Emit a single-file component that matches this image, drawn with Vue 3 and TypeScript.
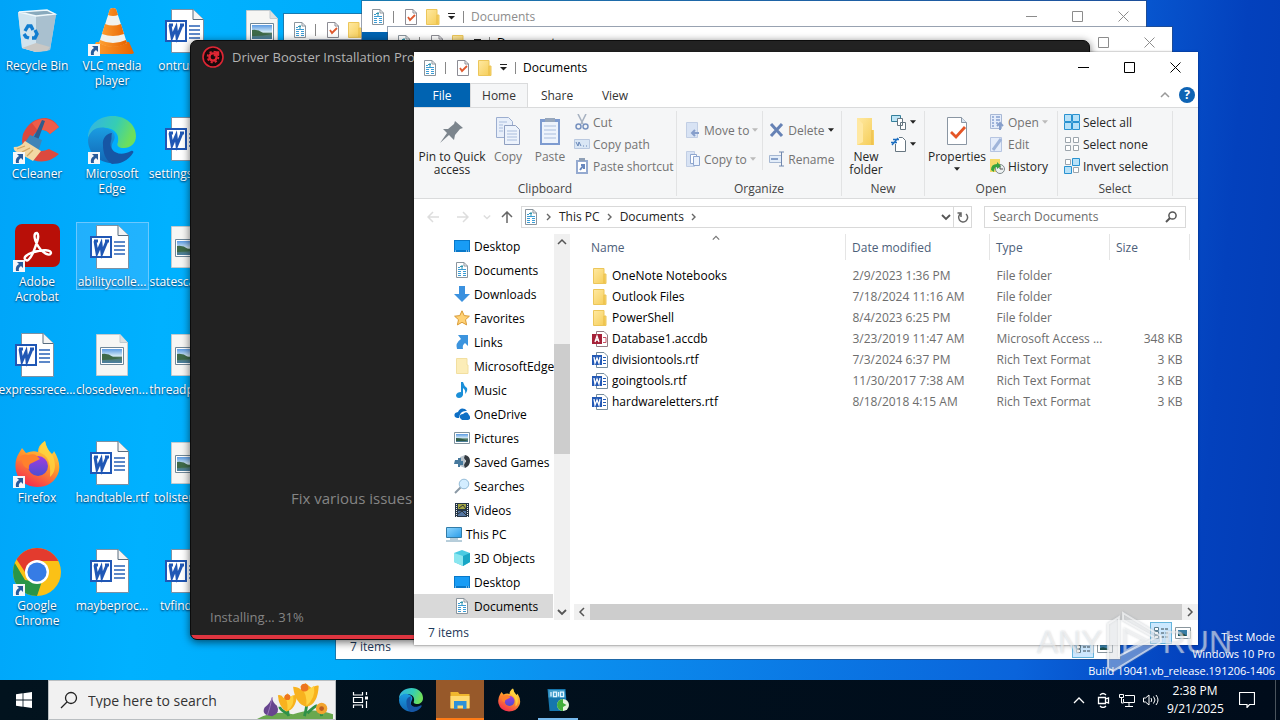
<script setup lang="ts">
import { ref } from 'vue'

interface Shortcut {
  label: string
  icon: string
  link?: boolean
  selected?: boolean
}
interface FileRow {
  name: string
  icon: string
  date: string
  type: string
  size: string
}
interface NavItem {
  label: string
  icon: string
  root?: boolean
  current?: boolean
}

const shortcuts: Shortcut[] = [
  { label: 'Recycle Bin', icon: 'bin' },
  { label: 'CCleaner', icon: 'ccleaner', link: true },
  { label: 'Adobe Acrobat', icon: 'acrobat', link: true },
  { label: 'expressrece...', icon: 'word' },
  { label: 'Firefox', icon: 'firefox', link: true },
  { label: 'Google Chrome', icon: 'chrome', link: true },
  { label: 'VLC media player', icon: 'vlc', link: true },
  { label: 'Microsoft Edge', icon: 'edge', link: true },
  { label: 'abilitycolle...', icon: 'word', selected: true },
  { label: 'closedeven...', icon: 'image' },
  { label: 'handtable.rtf', icon: 'word' },
  { label: 'maybeproc...', icon: 'word' },
  { label: 'ontrust.rtf', icon: 'word' },
  { label: 'settings.rtf.rtf', icon: 'word' },
  { label: 'statescar.png', icon: 'image' },
  { label: 'threadpa.png', icon: 'image' },
  { label: 'tolisten.png', icon: 'image' },
  { label: 'tvfinds.rtf', icon: 'word' },
  { label: '', icon: 'image' },
]

const backWindows = [
  { id: 'a', active: false },
  { id: 'b', active: false },
  { id: 'c', active: false },
  { id: 'd', active: false },
  { id: 'e', active: true },
]

const tabs = ['Home', 'Share', 'View']

const navItems: NavItem[] = [
  { label: 'Desktop', icon: 'n-desktop' },
  { label: 'Documents', icon: 'n-docs' },
  { label: 'Downloads', icon: 'n-down' },
  { label: 'Favorites', icon: 'n-star' },
  { label: 'Links', icon: 'n-link' },
  { label: 'MicrosoftEdge', icon: 'n-palefolder' },
  { label: 'Music', icon: 'n-music' },
  { label: 'OneDrive', icon: 'n-cloud' },
  { label: 'Pictures', icon: 'n-pic' },
  { label: 'Saved Games', icon: 'n-games' },
  { label: 'Searches', icon: 'n-search' },
  { label: 'Videos', icon: 'n-video' },
  { label: 'This PC', icon: 'n-pc', root: true },
  { label: '3D Objects', icon: 'n-cube' },
  { label: 'Desktop', icon: 'n-desktop' },
  { label: 'Documents', icon: 'n-docs', current: true },
]

const files: FileRow[] = [
  { name: 'OneNote Notebooks', icon: 'n-folder', date: '2/9/2023 1:36 PM', type: 'File folder', size: '' },
  { name: 'Outlook Files', icon: 'n-folder', date: '7/18/2024 11:16 AM', type: 'File folder', size: '' },
  { name: 'PowerShell', icon: 'n-folder', date: '8/4/2023 6:25 PM', type: 'File folder', size: '' },
  { name: 'Database1.accdb', icon: 'n-access', date: '3/23/2019 11:47 AM', type: 'Microsoft Access ...', size: '348 KB' },
  { name: 'divisiontools.rtf', icon: 'n-word', date: '7/3/2024 6:37 PM', type: 'Rich Text Format', size: '3 KB' },
  { name: 'goingtools.rtf', icon: 'n-word', date: '11/30/2017 7:38 AM', type: 'Rich Text Format', size: '3 KB' },
  { name: 'hardwareletters.rtf', icon: 'n-word', date: '8/18/2018 4:15 AM', type: 'Rich Text Format', size: '3 KB' },
]

const selectActions = [
  { label: 'Select all', icon: 'r-all' },
  { label: 'Select none', icon: 'r-none' },
  { label: 'Invert selection', icon: 'r-invert' },
]

const query = ref('')
const taskQuery = ref('')
</script>

<template>
  <div class="desktop">
    <svg class="defs" aria-hidden="true">
      <defs>
        <linearGradient id="gEdgeA" x1="0" y1="0" x2="1" y2="0.3"><stop offset="0" stop-color="#35b1e8" /><stop offset=".6" stop-color="#35cdb4" /><stop offset="1" stop-color="#6ddf5c" /></linearGradient>
        <linearGradient id="gEdgeB" x1="0" y1="0" x2="0" y2="1"><stop offset="0" stop-color="#1b9de2" /><stop offset="1" stop-color="#1266b4" /></linearGradient>
        <linearGradient id="gFire" x1=".8" y1="0" x2=".3" y2="1"><stop offset="0" stop-color="#ffe14a" /><stop offset=".45" stop-color="#ff9a2c" /><stop offset="1" stop-color="#f42a50" /></linearGradient>
        <linearGradient id="gViolet" x1="0" y1="0" x2="0" y2="1"><stop offset="0" stop-color="#a23be0" /><stop offset="1" stop-color="#4c4fd0" /></linearGradient>
        <linearGradient id="gSky" x1="0" y1="0" x2="0" y2="1"><stop offset="0" stop-color="#5b9be2" /><stop offset=".5" stop-color="#d5eaf6" /><stop offset=".6" stop-color="#557b62" /><stop offset="1" stop-color="#4a7fa3" /></linearGradient>
        <linearGradient id="gFold" x1="0" y1="0" x2="1" y2="1"><stop offset="0" stop-color="#ffe9a2" /><stop offset="1" stop-color="#f5cc55" /></linearGradient>
        <linearGradient id="gCone" x1="0" y1="0" x2="1" y2="0"><stop offset="0" stop-color="#ffa234" /><stop offset="1" stop-color="#e76300" /></linearGradient>
        <linearGradient id="gScreen" x1="0" y1="0" x2="1" y2="1"><stop offset="0" stop-color="#8ed6ff" /><stop offset="1" stop-color="#2a9ce8" /></linearGradient>
        <clipPath id="cc"><circle cx="24" cy="24" r="24" /></clipPath>
      </defs>

      <symbol id="bin" viewBox="0 0 48 48">
        <path d="M5 4 34 2 43 6 37 42 23 44 9 40Z" fill="#c7dcea" />
        <path d="M5 4 23 8 23 44 9 40Z" fill="#d0e3ee" /><path d="M23 8 43 6 37 42 23 44Z" fill="#a9c0cf" />
        <path d="M6 4 34 2 42 6 23 8Z" fill="#89aabd" stroke="#eff8fc" stroke-width="1.400" />
        <path d="m9 40 14-5 14 4-3 4-11 1Z" fill="#c9c8c5" />
        <g fill="none" stroke="#117dd0" stroke-width="3.400"><path d="m12 23 3-5h3l2 4" /><path d="m22 22 2 4-2 4h-3" /><path d="m16 30-3-1-2-3" /></g>
      </symbol>
      <symbol id="vlc" viewBox="0 0 48 48">
        <path d="M8 34h33l5 11q-1 1-3 1H5q-2 0-2-2Z" fill="url(#gCone)" />
        <path d="M22 1q3-2 6 0l11 34q-14 7-28 0Z" fill="#f1f1ed" />
        <path d="M22 1q3-2 6 0l2 6q-5 2-10 0ZM17 16q8 3 16 0l3 10q-11 4-22 0ZM11 35l1-3q13 6 26 0l1 3q-14 8-28 0Z" fill="url(#gCone)" />
      </symbol>
      <symbol id="ccleaner" viewBox="0 0 48 48">
        <path d="M46 11 37 18Q32 12 25 15 17 20 20 30 25 38 36 33L46 38Q34 49 20 44 6 35 10 18 17 2 33 2 41 3 46 11Z" fill="#dc493e" />
        <path d="M46 11 37 18Q32 12 25 15L19 7Q34-3 46 11Z" fill="#ee5d49" />
        <path d="m29 4 3 1-8 22-5-2Z" fill="#315c8b" /><path d="m17 19 12 5-4 12-14-8Z" fill="#3f84b8" />
        <path d="M12 25 28 35 20 45 2 35Q0 32 1 31 8 31 12 25Z" fill="#f2d7a3" />
        <path d="m4 33 8-3m-3 6 8-4m-3 8 6-6" stroke="#d2a662" stroke-width="1.300" />
      </symbol>
      <symbol id="edge" viewBox="0 0 48 48">
        <path d="M0 22C0 7 13 0 25 0 38 0 48 9 48 20 48 28 42 32 36 32 31 32 28 30 30 26 32 16 23 11 14 12 7 13 2 17 0 22Z" fill="url(#gEdgeA)" />
        <path d="M0 24C1 14 10 10 17 12 28 15 28 21 25 26 21 33 27 41 37 42 30 49 20 48 12 44 4 39 0 32 0 24Z" fill="url(#gEdgeB)" />
        <path d="M15 29C14 22 19 17 24 17 23 20 24 22 23 25 20 34 30 42 43 35 45 34 46 36 45 37 40 45 32 48 24 48 17 44 15 36 15 29Z" fill="#1656a5" />
      </symbol>
      <symbol id="acrobat" viewBox="0 0 48 48">
        <rect x="2" y="0" width="45" height="43" rx="7" fill="#b80f08" />
        <path d="M13 36C9 34 14 30 21 28 30 25 38 26 38 29 37 33 29 29 25 22 20 13 21 9 24 9 27 11 24 19 20 29 17 35 14 38 13 36Z" fill="none" stroke="#fff" stroke-width="2.400" />
      </symbol>
      <symbol id="firefox" viewBox="0 0 48 48">
        <path d="M6 13 9 8 13 13Q20 10 25 12 25 5 32 1 33 9 39 14 41 12 41 11 49 24 45 34 39 47 24 47 7 46 3 31 1 21 6 13Z" fill="url(#gFire)" />
        <circle cx="25" cy="26" r="10" fill="url(#gViolet)" />
        <path d="M4 21Q8 13 15 15q7-2 9 1l3 3-8 4q-4 1-3 6-7-2-7-9Z" fill="#ff812c" />
        <path d="M26 12Q27 5 32 1 34 10 40 16 45 30 37 37 38 24 34 18 31 14 26 12Z" fill="#ffd540" opacity=".8" />
      </symbol>
      <symbol id="chrome" viewBox="0 0 48 48">
        <g clip-path="url(#cc)"><path d="M0 0H48V48H0Z" fill="#fbc116" /><path d="M0 12 12 32 24 34 31 27 24 48H0Z" fill="#299548" /><path d="M0 8V-2H48V13H24L12 24 4 12Z" fill="#e33b2e" /></g>
        <circle cx="24" cy="24" r="12" fill="#fff" /><circle cx="24" cy="24" r="9.600" fill="#367ce5" />
      </symbol>
      <symbol id="word" viewBox="0 0 48 48">
        <path d="M8.500 1.500H30L40.500 11.500V44.500H8.500Z" fill="#fff" stroke="#7c91a4" /><path d="M30 1.500V11.500H40.500" fill="#f4f4f4" stroke="#596d7f" />
        <path d="M26 18h11M26 22h11M26 26h11M26 30h11" stroke="#2961b6" stroke-width="1.300" />
        <path d="M2 12H24V34H2Z" fill="#2057b5" /><path d="M4 14H22V32H4Z" fill="#fff" /><path d="M6 17h4M7 17l2 12 4-9 1 9 5-12M17 17h4" fill="none" stroke="#2057b5" stroke-width="3" />
      </symbol>
      <symbol id="image" viewBox="0 0 48 48">
        <path d="M8.500 2.500H32L39.500 10.500V43.500H8.500Z" fill="#f6f6f4" stroke="#c2cbd0" /><path d="M32 2.500V10.500H39.500" fill="#dce0e1" stroke="#c2cbd0" />
        <path d="M12.500 15.500H35.500V32.500H12.500Z" fill="#fff" stroke="#6f8798" /><path d="M14 17H34V31H14Z" fill="url(#gSky)" /><path d="M14 22Q20 21 25 25L34 26Q24 28 14 28Z" fill="#3f6a48" />
      </symbol>
      <symbol id="folder" viewBox="0 0 48 48">
        <path d="M5 8h15l3 4h20v28H5Z" fill="#f0b72e" /><path d="M5 16h38v25H5Z" fill="#ffdb72" /><path d="M12 26h25v16h-7v-7H19v7h-7Z" fill="#2e91d8" />
      </symbol>
      <symbol id="iobit" viewBox="0 0 48 48">
        <path d="M3 2h36l3 40-9 4H7Z" fill="#1676ad" /><path d="M5 4h32l2 15H5Z" fill="#409dcb" /><path d="M10 8v9m5-9h6v9h-6Zm10 0v9m4-9h6v9h-6Z" stroke="#e1f5ff" stroke-width="2.500" fill="none" /><circle cx="34" cy="34" r="12" fill="#e6f1df" /><path d="M34 22a12 12 0 0 0 0 24V38l7-4-7-4Z" fill="#43ae3b" />
      </symbol>

      <symbol id="n-docs" viewBox="0 0 16 16"><path d="M2.500.5H10L13.500 4V15.500H2.500Z" fill="#fff" stroke="#8b959d" /><path d="M10 .5V4h3.500" fill="none" stroke="#8b959d" /><path d="M4 5.500h2M4 7.500h8M4 9.500h3M9 9.500h3M4 11.500h3M9 11.500h3M4 13.500h3M9 13.500h3" stroke="#3b9cd4" /><path d="M8 3v4M6 4.500h3" stroke="#2f93ad" /></symbol>
      <symbol id="n-check" viewBox="0 0 16 16"><path d="M2.500.5H10L13.500 4V15.500H2.500Z" fill="#fff" stroke="#8d8d95" /><path d="M10 .5V4h3.500" fill="none" stroke="#8d8d95" /><path d="m5 8 2 3 5-5" fill="none" stroke="#e05a2f" stroke-width="1.800" /></symbol>
      <symbol id="n-folder" viewBox="0 0 16 16"><path d="M1.500.5H12V6h2v9.500H1.500Z" fill="url(#gFold)" stroke="#ecc65a" /><path d="M12 6V15" stroke="#e7b941" /></symbol>
      <symbol id="n-palefolder" viewBox="0 0 16 16"><path d="M2.500.5H13V7h1v8.500H2.500Z" fill="#fcedb8" stroke="#f2dfa0" /></symbol>
      <symbol id="n-desktop" viewBox="0 0 16 16"><path d="M0 2H16V14H0Z" fill="#0878c9" /><path d="M1 3H15V12H1Z" fill="#189cf5" /><path d="M1 13h1m10 0h1m1 0h1" stroke="#d8efff" /></symbol>
      <symbol id="n-down" viewBox="0 0 16 16"><path d="M5 0h6v8h5l-8 8-8-8h5Z" fill="#3b91df" /></symbol>
      <symbol id="n-star" viewBox="0 0 16 16"><path d="m8 .8 2.200 4.800 5.200.6-3.900 3.500 1.100 5.200L8 12.300l-4.600 2.600 1.100-5.200L.6 6.200l5.200-.6Z" fill="#ffd276" stroke="#d99a35" /></symbol>
      <symbol id="n-link" viewBox="0 0 16 16"><path d="M4 1h10v11l-3-3q-3 2-2 6H3Q1 9 7 5Z" fill="#3c94de" /></symbol>
      <symbol id="n-music" viewBox="0 0 16 16"><path d="M7 0h2q1 4 4 6 1 3-2 6 1-4-2-6v7q-1 3-4 3T2 13q1-3 5-3Z" fill="#1b8fd8" /></symbol>
      <symbol id="n-cloud" viewBox="0 0 16 16"><path d="M1 11Q-1 7 4 6q2-5 7-3l2 2Q6 4 5 12H3Zm5 1q-1-4 3-4 4-4 6 1 3 4-1 5H8Z" fill="#0e6fc5" /></symbol>
      <symbol id="n-pic" viewBox="0 0 16 16"><path d="M.5 2.500h15v11H.5Z" fill="#fff" stroke="#81939f" /><path d="M2 4h12v8H2Z" fill="url(#gSky)" /><path d="M2 8q5 0 12 3H2Z" fill="#315c46" /></symbol>
      <symbol id="n-games" viewBox="0 0 16 16"><path d="M6 3 11 1v13l-5-2Z" fill="#b7c2cb" /><path d="M11 1q5 1 5 6 0 5-5 7l-1-3 2-4-2-3Z" fill="#343a40" /><path d="M1 6h3V4h3v3h2v4H6v2H4v-3H0Z" fill="#47799d" /></symbol>
      <symbol id="n-search" viewBox="0 0 16 16"><path d="m7 9-6 6" stroke="#8a98a4" stroke-width="2" /><circle cx="10" cy="6" r="4.800" fill="#d3edff" stroke="#94bcd8" /></symbol>
      <symbol id="n-video" viewBox="0 0 16 16"><path d="M1 1h14v14H1Z" fill="#263646" /><path d="M4 2h8v5H4Z" fill="#a3a644" /><path d="M4 9h8v5H4Z" fill="#5375a1" /><path d="m5 6 4-3 3 4M4 12l4-3 4 4" stroke="#2e3437" fill="none" /><path d="M2.500 2v13M13.500 2v13" stroke="#eee" stroke-dasharray="1 1" /></symbol>
      <symbol id="n-pc" viewBox="0 0 16 16"><path d="M.5 1.500h15v10H.5Z" fill="url(#gScreen)" stroke="#327ca8" /><path d="M4 13h8M0 15h16" stroke="#6e9cb6" /></symbol>
      <symbol id="n-cube" viewBox="0 0 16 16"><path d="m0 3 8-3 8 3v9l-7 4-9-4Z" fill="#49cbe2" /><path d="m0 3 9 3v10l-9-4Z" fill="#8ae6ef" /><path d="m9 6 7-3v9l-7 4Z" fill="#18a6c5" /></symbol>
      <symbol id="n-word" viewBox="0 0 16 16"><path d="M4.500.5H12L15.500 4v11.500h-11Z" fill="#fff" stroke="#758c9d" /><path d="M11 5.500h3M11 8.500h3M11 11.500h3" stroke="#225bb4" /><path d="M0 3h10v10H0Z" fill="#2359b5" /><path d="m2 5 1 6 2-5 2 5 1-6" fill="none" stroke="#fff" stroke-width="1.300" /></symbol>
      <symbol id="n-access" viewBox="0 0 16 16"><path d="M4.500.5H12L15.500 4v11.500h-11Z" fill="#fff" stroke="#957c85" /><path d="M11 6.500h3v5h-3" fill="none" stroke="#c45265" /><path d="M0 3h10v10H0Z" fill="#a52239" /><path d="m3 11 2-6 2 6M4 9h3" fill="none" stroke="#fff" stroke-width="1.300" /></symbol>

      <symbol id="r-pin" viewBox="0 0 32 32"><path d="m19 6 8 7-3 1-5 6-1 5-5-5-9 8 7-10-4-4 5 0 6-5Z" fill="#7c858d" /></symbol>
      <symbol id="r-copy" viewBox="0 0 32 32"><path d="M4.500 2.500h12l4 4v16h-16Z" fill="#e8effa" stroke="#9caed0" /><path d="M12.500 10.500h11l4 4v15h-15Z" fill="#edf3fc" stroke="#8f9fc0" /><path d="M7 7h8M7 10h4M7 13h4M7 16h4M15 16h10M15 19h10M15 22h10M15 25h10" stroke="#a9bddd" /></symbol>
      <symbol id="r-paste" viewBox="0 0 32 32"><path d="M6 4h20v26H6Z" fill="#7d9bd0" /><path d="M8 7h16v21H8Z" fill="#edf3fc" /><path d="M11 3h10v4H11Z" fill="#97a7bc" /><path d="M10 11h12M10 15h12M10 19h12M10 23h12" stroke="#a9bddd" /></symbol>
      <symbol id="r-cut" viewBox="0 0 16 16"><path d="m4 0 5 10M12 0 7 10" stroke="#a8b3c2" stroke-width="1.600" /><circle cx="4.500" cy="12.500" r="2.500" fill="none" stroke="#7892bf" stroke-width="1.500" /><circle cx="11.500" cy="12.500" r="2.500" fill="none" stroke="#7892bf" stroke-width="1.500" /></symbol>
      <symbol id="r-path" viewBox="0 0 16 16"><path d="M.5 3.500h15v9H.5Z" fill="#d9e6f5" stroke="#b9c8df" /><path d="m2 6 2 4 1-4 2 4m2 0h1m2 0h1" fill="none" stroke="#6887b7" /></symbol>
      <symbol id="r-short" viewBox="0 0 16 16"><path d="M2 2h12v14H2Z" fill="#95aad0" /><path d="M4 4h8v10H4Z" fill="#fff" /><path d="M5 0h6v3H5Z" fill="#8fa0b6" /><path d="m6 12 3-4m-2-1h3v4" stroke="#6887bd" stroke-width="2" fill="none" /></symbol>
      <symbol id="r-move" viewBox="0 0 16 16"><path d="M1.500.5h11v15h-11Z" fill="#d8e3f4" stroke="#c1cee4" /><path d="M14 11H7m3-3-3 3 3 3" fill="none" stroke="#879fcb" stroke-width="2" /></symbol>
      <symbol id="r-copyto" viewBox="0 0 16 16"><path d="M1.500.5h8v15h-8Z" fill="#d8e3f4" stroke="#c1cee4" /><path d="M5.500 3.500h6v9h-6Z" fill="#fff" stroke="#8fa6ce" /><path d="M8.500 5.500h6v9h-6Z" fill="#edf3fc" stroke="#8fa6ce" /></symbol>
      <symbol id="r-del" viewBox="0 0 16 16"><path d="m2 2 11 12M13 2 2 14" stroke="#6682b5" stroke-width="3" /></symbol>
      <symbol id="r-ren" viewBox="0 0 16 16"><path d="M.5 4.500h12v7H.5Z" fill="#e3edf9" stroke="#a4b6d1" /><path d="M2 7h7v2H2Z" fill="#859fc8" /><path d="M10 1h5m-2.500 0v14M10 15h5" stroke="#7188ae" /></symbol>
      <symbol id="r-new" viewBox="0 0 32 32"><path d="M7 3h15v12h2v15H7Z" fill="url(#gFold)" /><path d="m7 3 6 6v18l-6 3Z" fill="#ffe8a2" /><path d="M22 15v15" stroke="#e9b949" /></symbol>
      <symbol id="r-item" viewBox="0 0 16 16"><path d="M.5 1.500h9v6h-9Z" fill="#bde4f5" stroke="#347f9b" /><path d="M6.500 4.500h5v7h-5ZM9.500 8.500h5v7h-5Z" fill="#fff" stroke="#647580" /></symbol>
      <symbol id="r-easy" viewBox="0 0 16 16"><path d="M4.500 8v7.500h10v-11l-3-3H8" fill="#fff" stroke="#677681" /><path d="M2 3.500h6M0 6.500h6M1 9 7 2" stroke="#1e6fc1" stroke-width="1.300" /></symbol>
      <symbol id="r-props" viewBox="0 0 32 32"><path d="M6.500 2.500h14l5 5v22h-19Z" fill="#fff" stroke="#8a96a3" /><path d="M20.500 2.500v5h5" fill="#dbe6f2" stroke="#8a96a3" /><path d="m10 17 5 5 9-10" fill="none" stroke="#e55526" stroke-width="2.800" /></symbol>
      <symbol id="r-open" viewBox="0 0 16 16"><path d="M1.500.5h11v14h-11Z" fill="#e4ecfa" stroke="#a8b8d5" /><path d="M3 3h2m2 0h4M3 6h2m2 0h4M3 9h2m2 0h2M3 12h2" stroke="#86a0cf" stroke-width="1.500" /><path d="M11 16V9m-3 3 3-3 3 3" fill="none" stroke="#879fcb" stroke-width="2" /></symbol>
      <symbol id="r-edit" viewBox="0 0 16 16"><path d="M1.500 1.500h11v14h-11Z" fill="#e4ecfa" stroke="#b6c5e1" /><path d="m4 14 8-11" stroke="#9fb4d9" stroke-width="3" /></symbol>
      <symbol id="r-hist" viewBox="0 0 16 16"><path d="M1 1h10v13H1Z" fill="#f5da68" /><circle cx="11" cy="11" r="4.500" fill="#eef2f2" stroke="#7d878a" /><path d="M2 12q0-6 6-6V4l4 4-4 3V9q-3 0-3 5Z" fill="#36a33f" /><path d="M11 8v3h3" stroke="#555" fill="none" /></symbol>
      <symbol id="r-all" viewBox="0 0 16 16"><path d="M.5.5h7v7h-7Zm8 0h7v7h-7Zm-8 8h7v7h-7Zm8 0h7v7h-7Z" fill="#b7e1f8" stroke="#2992d0" /></symbol>
      <symbol id="r-none" viewBox="0 0 16 16"><path d="M1.500 1.500h5v5h-5Zm8 0h5v5h-5Zm-8 8h5v5h-5Zm8 0h5v5h-5Z" fill="#fff" stroke="#9ca5ac" /></symbol>
      <symbol id="r-invert" viewBox="0 0 16 16"><path d="M1.500 1.500h5v5h-5Zm8 8h5v5h-5Z" fill="#fff" stroke="#9ca5ac" /><path d="M8.500.5h7v7h-7Zm-8 8h7v7h-7Z" fill="#b7e1f8" stroke="#2992d0" /></symbol>

      <symbol id="c-right" viewBox="0 0 8 8"><path d="m2 1 3 3-3 3" fill="none" stroke="currentColor" stroke-width="1.400" /></symbol>
      <symbol id="c-down" viewBox="0 0 10 10"><path d="m1 3 4 4 4-4" fill="none" stroke="currentColor" stroke-width="1.800" /></symbol>
      <symbol id="c-up" viewBox="0 0 10 10"><path d="m1 7 4-4 4 4" fill="none" stroke="currentColor" stroke-width="1.500" /></symbol>
      <symbol id="c-tri" viewBox="0 0 7 4"><path d="M0 0h7L3.500 4Z" fill="currentColor" /></symbol>
      <symbol id="a-left" viewBox="0 0 12 12"><path d="M12 6H1m5-5L1 6l5 5" fill="none" stroke="currentColor" stroke-width="1.500" /></symbol>
      <symbol id="w-min" viewBox="0 0 11 11"><path d="M0 5.500h11" stroke="currentColor" /></symbol>
      <symbol id="w-max" viewBox="0 0 11 11"><path d="M.5.5h10v10H.5Z" fill="none" stroke="currentColor" /></symbol>
      <symbol id="w-close" viewBox="0 0 11 11"><path d="m.5.5 10 10M10.500.5l-10 10" stroke="currentColor" /></symbol>
      <symbol id="v-details" viewBox="0 0 16 12"><path d="M1.500.5h4v3h-4Zm0 4h4v3h-4Zm0 4h4v3h-4Z" fill="#fff" stroke="#5c7f92" /><path d="M8 2h3m1 0h3M8 6h3m1 0h3M8 10h3m1 0h3" stroke="#36474f" /></symbol>
      <symbol id="v-large" viewBox="0 0 16 12"><path d="M.5.5h15v11H.5Z" fill="#fff" stroke="#8a969d" /><path d="M3 3h9v6H3Z" fill="#397da4" /><path d="M3 7q5-2 9 2H3Z" fill="#1d4d49" /></symbol>
    </svg>

    <main class="icons">
      <button v-for="(s, i) in shortcuts" :key="i" class="shortcut" :class="{ selected: s.selected }">
        <span class="pic">
          <svg class="i48"><use :href="'#' + s.icon" /></svg>
          <svg v-if="s.link" class="arrow" viewBox="0 0 12 12"><path d="M0 0h12v12H0Z" fill="#f4f7fa" /><path d="M4 2h6v6L8 6Q5 8 6 11H3Q2 6 6 4Z" fill="#285b9b" /></svg>
        </span>
        <span class="name">{{ s.label }}</span>
      </button>
    </main>

    <div class="build">Test Mode<br />Windows 10 Pro<br />Build 19041.vb_release.191206-1406</div>

    <section v-for="w in backWindows" :key="w.id" class="win back" :class="['win-' + w.id, { active: w.active }]">
      <header class="titlebar">
        <svg class="i16"><use href="#n-docs" /></svg><i class="bar"></i>
        <svg class="i16"><use href="#n-check" /></svg><svg class="i16"><use href="#n-folder" /></svg>
        <svg class="quick" viewBox="0 0 7 7"><path d="M0 .5h7" stroke="#222" /><path d="M0 3h7L3.500 6.500Z" fill="#222" /></svg><i class="bar thin"></i>
        <span class="caption">Documents</span>
        <button class="wb" aria-label="Minimize"><svg><use href="#w-min" /></svg></button>
        <button class="wb" aria-label="Maximize"><svg><use href="#w-max" /></svg></button>
        <button class="wb" aria-label="Close"><svg><use href="#w-close" /></svg></button>
      </header>
      <div class="tabs"><button class="file">File</button></div>
      <div class="grow"></div>
      <footer class="status"><span>7 items</span><span class="views"><button class="view on" aria-label="Details"><svg><use href="#v-details" /></svg></button><button class="view" aria-label="Large icons"><svg><use href="#v-large" /></svg></button></span></footer>
    </section>

    <section class="booster">
      <header class="bhead">
        <svg viewBox="0 0 22 22"><circle cx="11" cy="11" r="10" fill="#1a0a0c" stroke="#df2634" stroke-width="1.600" /><circle cx="11" cy="11" r="3.600" fill="none" stroke="#df2634" stroke-width="2.400" /><circle cx="11" cy="11" r="5.400" fill="none" stroke="#df2634" stroke-width="1.800" stroke-dasharray="2.200 2.040" /><path d="m12 10 4-4M13 6h3.500v3.500" stroke="#df2634" stroke-width="1.500" fill="none" /></svg>
        <span>Driver Booster Installation Program</span>
      </header>
      <p class="fix">Fix various issues</p>
      <p class="progress-text">Installing... 31%</p>
      <div class="progress"></div>
    </section>

    <section class="win front">
      <header class="titlebar">
        <svg class="i16"><use href="#n-docs" /></svg><i class="bar"></i>
        <svg class="i16"><use href="#n-check" /></svg><svg class="i16"><use href="#n-folder" /></svg>
        <svg class="quick" viewBox="0 0 7 7"><path d="M0 .5h7" stroke="#222" /><path d="M0 3h7L3.500 6.500Z" fill="#222" /></svg><i class="bar thin"></i>
        <span class="caption">Documents</span>
        <button class="wb" aria-label="Minimize"><svg><use href="#w-min" /></svg></button>
        <button class="wb" aria-label="Maximize"><svg><use href="#w-max" /></svg></button>
        <button class="wb" aria-label="Close"><svg><use href="#w-close" /></svg></button>
      </header>
      <nav class="tabs">
        <button class="file">File</button>
        <button v-for="t in tabs" :key="t" class="tab" :class="{ open: t === 'Home' }">{{ t }}</button>
        <span class="grow"></span>
        <button class="collapse" aria-label="Collapse ribbon"><svg class="i10"><use href="#c-up" /></svg></button>
        <button class="help" aria-label="Help">?</button>
      </nav>

      <div class="ribbon">
        <div class="group clip">
          <div class="tools">
            <button class="big pin"><svg><use href="#r-pin" /></svg>Pin to Quick access</button>
            <button class="big off"><svg><use href="#r-copy" /></svg>Copy</button>
            <button class="big off"><svg><use href="#r-paste" /></svg>Paste</button>
            <div class="stack">
              <button class="small off"><svg class="i16"><use href="#r-cut" /></svg>Cut</button>
              <button class="small off"><svg class="i16"><use href="#r-path" /></svg>Copy path</button>
              <button class="small off"><svg class="i16"><use href="#r-short" /></svg>Paste shortcut</button>
            </div>
          </div>
          <h2>Clipboard</h2>
        </div>
        <div class="group org">
          <div class="tools">
            <div class="stack loose">
              <button class="small off"><svg class="i16"><use href="#r-move" /></svg>Move to<svg class="tri pale"><use href="#c-tri" /></svg></button>
              <button class="small off"><svg class="i16"><use href="#r-copyto" /></svg>Copy to<svg class="tri pale"><use href="#c-tri" /></svg></button>
            </div>
            <i class="split"></i>
            <div class="stack loose">
              <button class="small off"><svg class="i16"><use href="#r-del" /></svg>Delete<svg class="tri"><use href="#c-tri" /></svg></button>
              <button class="small off"><svg class="i16"><use href="#r-ren" /></svg>Rename</button>
            </div>
          </div>
          <h2>Organize</h2>
        </div>
        <div class="group new">
          <div class="tools">
            <button class="big"><svg><use href="#r-new" /></svg>New folder</button>
            <div class="stack">
              <button class="small" aria-label="New item"><svg class="i16"><use href="#r-item" /></svg><svg class="tri"><use href="#c-tri" /></svg></button>
              <button class="small" aria-label="Easy access"><svg class="i16"><use href="#r-easy" /></svg><svg class="tri"><use href="#c-tri" /></svg></button>
            </div>
          </div>
          <h2>New</h2>
        </div>
        <div class="group open-group">
          <div class="tools">
            <button class="big props"><svg><use href="#r-props" /></svg>Properties<svg class="tri"><use href="#c-tri" /></svg></button>
            <div class="stack">
              <button class="small off"><svg class="i16"><use href="#r-open" /></svg>Open<svg class="tri pale"><use href="#c-tri" /></svg></button>
              <button class="small off"><svg class="i16"><use href="#r-edit" /></svg>Edit</button>
              <button class="small"><svg class="i16"><use href="#r-hist" /></svg>History</button>
            </div>
          </div>
          <h2>Open</h2>
        </div>
        <div class="group sel">
          <div class="tools">
            <div class="stack">
              <button v-for="a in selectActions" :key="a.label" class="small"><svg class="i16"><use :href="'#' + a.icon" /></svg>{{ a.label }}</button>
            </div>
          </div>
          <h2>Select</h2>
        </div>
      </div>

      <div class="address">
        <button class="nav-btn dim" aria-label="Back"><svg><use href="#a-left" /></svg></button>
        <button class="nav-btn dim fwd" aria-label="Forward"><svg><use href="#a-left" /></svg></button>
        <button class="nav-btn dim recent" aria-label="Recent"><svg class="i8"><use href="#c-down" /></svg></button>
        <button class="nav-btn up" aria-label="Up"><svg><use href="#a-left" /></svg></button>
        <div class="crumbs">
          <svg class="i16"><use href="#n-docs" /></svg>
          <svg class="i8"><use href="#c-right" /></svg><a href="#">This PC</a>
          <svg class="i8"><use href="#c-right" /></svg><a href="#">Documents</a>
          <svg class="i8"><use href="#c-right" /></svg>
          <span class="grow"></span>
          <button class="drop" aria-label="Previous locations"><svg class="i10"><use href="#c-down" /></svg></button>
          <button class="refresh" aria-label="Refresh"><svg viewBox="0 0 12 12"><path d="M9 3A4.500 4.500 0 1 1 4 2.500M4 6V2H.5" fill="none" stroke="#666" stroke-width="1.500" /></svg></button>
        </div>
        <label class="find"><input v-model="query" type="text" placeholder="Search Documents" aria-label="Search Documents" /><svg viewBox="0 0 12 12"><circle cx="7.500" cy="4.500" r="3.600" fill="none" stroke="#555" stroke-width="1.500" /><path d="M5 7 1 11" stroke="#555" stroke-width="2" /></svg></label>
      </div>

      <div class="body">
        <nav class="tree">
          <a v-for="(n, i) in navItems" :key="i" href="#" :class="{ root: n.root, current: n.current }"><svg class="i16"><use :href="'#' + n.icon" /></svg>{{ n.label }}</a>
        </nav>
        <div class="vbar">
          <button aria-label="Scroll up"><svg class="i10"><use href="#c-up" /></svg></button>
          <span class="track"><span class="thumb"></span></span>
          <button aria-label="Scroll down"><svg class="i10"><use href="#c-down" /></svg></button>
        </div>
        <div class="list">
          <table>
            <colgroup><col /><col class="c-date" /><col class="c-type" /><col class="c-size" /></colgroup>
            <thead>
              <tr><th>Name<svg class="i8 sort"><use href="#c-up" /></svg></th><th>Date modified</th><th>Type</th><th>Size</th></tr>
            </thead>
            <tbody>
              <tr v-for="f in files" :key="f.name">
                <td><span class="cell"><svg class="i16"><use :href="'#' + f.icon" /></svg>{{ f.name }}</span></td>
                <td>{{ f.date }}</td><td>{{ f.type }}</td><td class="num">{{ f.size }}</td>
              </tr>
            </tbody>
          </table>
          <div class="hbar">
            <button aria-label="Scroll left"><svg class="i10 lft"><use href="#c-up" /></svg></button>
            <span class="hthumb"></span>
            <button aria-label="Scroll right"><svg class="i10 rgt"><use href="#c-up" /></svg></button>
          </div>
        </div>
      </div>
      <footer class="status"><span>7 items</span><span class="views"><button class="view on" aria-label="Details"><svg><use href="#v-details" /></svg></button><button class="view" aria-label="Large icons"><svg><use href="#v-large" /></svg></button></span></footer>
    </section>

    <div class="mark">
      <span>ANY</span>
      <svg viewBox="0 0 60 64"><path d="M5 58V14L16 7V46L52 28 20 10V3L58 26V32L10 61Z" fill="#fff" fill-opacity=".3" stroke="#fff" stroke-opacity=".6" stroke-width="2" /><path d="M22 20v22l20-12Z" fill="none" stroke="#fff" stroke-opacity=".5" stroke-width="3" /></svg>
      <span>RUN</span>
    </div>

    <footer class="taskbar">
      <button class="start" aria-label="Start"><svg viewBox="0 0 16 16"><path d="M0 2.200 6.600 1.300V7.600H0ZM7.400 1.200 16 0V7.600H7.400ZM0 8.400H6.600V14.700L0 13.800ZM7.400 8.400H16V16L7.400 14.800Z" fill="#fff" /></svg></button>
      <label class="search">
        <svg class="glass" viewBox="0 0 18 18"><circle cx="11" cy="7" r="5.500" fill="none" stroke="#222" stroke-width="1.300" /><path d="m7 11-6 6" stroke="#222" stroke-width="1.300" /></svg>
        <input v-model="taskQuery" type="text" placeholder="Type here to search" aria-label="Type here to search" />
        <svg class="flowers" viewBox="0 0 80 40"><path d="M0 40Q18 30 38 35 60 27 80 35V40Z" fill="#69a84f" /><path d="M33 37q-1-8-2-14M50 37q3-12 3-20M68 37l-1-7M53 34q8-8 10-8M33 35q-9-5-9-8" stroke="#2f9148" stroke-width="3" fill="none" /><path d="M16 17q0 5 5 9 4 8-5 11-12-1-8-9 6-5 8-11Z" fill="#67458f" /><path d="M16 17q-2 10-5 19" stroke="#9b78bd" fill="none" /><path d="M22 15q4-1 6 3l4-5 4 4q2-3 6-2-1 15-11 17-8-4-9-17Z" fill="#f8b21e" /><path d="M27 15q6 4 5 16 8-5 6-16l-6 3Z" fill="#ffd13c" /><path d="M38 6q5 0 8 3l5-7 7 6q3-4 7-3-1 20-13 22-12-3-14-21Z" fill="#f8b21e" /><path d="M45 5q8 8 7 21 10-8 8-21l-7 5Z" fill="#ffd343" /><circle cx="50" cy="7" r="4" fill="#ed741f" /><circle cx="32" cy="17" r="3" fill="#ed741f" /><circle cx="68" cy="29" r="6" fill="#f2a52f" /><circle cx="68" cy="29" r="2.500" fill="#bb5c22" /></svg>
      </label>
      <button class="app task" aria-label="Task view"><svg class="tv" viewBox="0 0 18 18"><path d="M2.500 1v3h9V1M2.500 17v-3h9v3M2.500 6.500h9v5h-9ZM15.500 1v3M15.500 10v7" fill="none" stroke="#fff" stroke-width="1.200" /><path d="M14 5.500h3v3h-3Z" fill="#fff" /></svg></button>
      <button class="app" aria-label="Edge"><svg><use href="#edge" /></svg></button>
      <button class="app hot" aria-label="File Explorer"><svg><use href="#folder" /></svg></button>
      <button class="app" aria-label="Firefox"><svg><use href="#firefox" /></svg></button>
      <button class="app run" aria-label="IObit"><svg><use href="#iobit" /></svg></button>
      <span class="grow"></span>
      <div class="tray">
        <button aria-label="Hidden icons"><svg viewBox="0 0 16 16"><path d="m3 11 5-5 5 5" fill="none" stroke="#fff" stroke-width="1.300" /></svg></button>
        <button aria-label="Camera"><svg viewBox="0 0 16 16"><path d="M3.500 5.500h7v6h-7ZM10.500 7l3-1v5l-3-1M5 3q3-3 6 0M5 14q3 3 6 0" fill="none" stroke="#fff" stroke-width="1.300" /></svg></button>
        <button aria-label="Network"><svg viewBox="0 0 16 16"><path d="M6 3.500h9.500v7h-11V7M10 11v3m-4 .5h8M.5 2.500h4v3h-4ZM2.500 6v5h2" fill="none" stroke="#fff" /></svg></button>
        <button aria-label="Volume"><svg viewBox="0 0 16 16"><path d="M.5 6h2L6 3v10L2.500 10h-2ZM8 6q1.500 2 0 4M10.500 4.500q3 3.500 0 7M13 3q4 5 0 10" fill="none" stroke="#fff" /></svg></button>
      </div>
      <button class="clock">2:38 PM<br />9/21/2025</button>
      <button class="note" aria-label="Notifications"><svg viewBox="0 0 16 16"><path d="M.5.5h15v12h-5L8 15.500V12.500H.5Z" fill="none" stroke="#fff" stroke-width="1.200" /></svg></button>
      <i class="edge-line"></i>
    </footer>
  </div>
</template>

<style>
body {
  margin: 0;
  overflow: hidden;
}
</style>

<style scoped>
.desktop {
  position: relative;
  height: 100vh;
  overflow: hidden;
  display: flex;
  flex-direction: column;
  font-family: 'Open Sans', 'Noto Sans', sans-serif;
  font-size: 12px;
  line-height: 15px;
  color: #000;
  background: linear-gradient(95deg, #00a4f8 0%, #00b1ff 14%, #00acfa 30%, #0b92f0 45%, #0a64db 80%, #0341bd 93%, #033cb5 100%);
}
.desktop * {
  box-sizing: border-box;
}
.defs {
  position: absolute;
  width: 0;
  height: 0;
}
button {
  font: inherit;
  color: inherit;
  background: none;
  border: 0;
  padding: 0;
  margin: 0;
}
a {
  color: inherit;
  text-decoration: none;
}
svg {
  display: block;
  flex: none;
}
input {
  font: inherit;
  border: 0;
  outline: 0;
  background: none;
  padding: 0;
  min-width: 0;
  flex: 1;
}
.grow {
  flex: 1;
}
.i48 { width: 48px; height: 48px; }
.i16 { width: 16px; height: 16px; }
.i10 { width: 10px; height: 10px; }
.i8 { width: 8px; height: 8px; }

.icons {
  flex: 1;
  display: grid;
  grid-template-rows: repeat(6, 108px);
  grid-auto-columns: 75px;
  grid-auto-flow: column;
  justify-content: start;
}
.shortcut {
  margin: 6px 1px 0;
  padding: 1px 1px 0 0;
  border: 1px solid transparent;
  align-self: start;
  display: flex;
  flex-direction: column;
  align-items: center;
  gap: 2px;
}
.shortcut.selected {
  background: rgba(120, 190, 255, 0.28);
  border-color: rgba(140, 210, 255, 0.7);
}
.pic {
  position: relative;
}
.arrow {
  position: absolute;
  left: 0;
  bottom: 0;
  width: 12px;
  height: 12px;
}
.name {
  color: #fff;
  text-shadow: 0 1px 2px rgba(0, 20, 60, 0.9);
}

.build {
  position: absolute;
  right: 5px;
  bottom: 41px;
  color: #fff;
  text-align: right;
  font-size: 11px;
  line-height: 17px;
}

.win {
  position: absolute;
  display: flex;
  flex-direction: column;
  background: #fff;
}
.back {
  width: calc(100% - 496px);
  height: calc(100% - 127px);
  box-shadow: 0 0 0 1px rgba(50, 70, 100, 0.5);
}
.win-a { left: 284px; top: 14px; }
.win-b { left: 310px; top: 40px; }
.win-c { left: 336px; top: 66px; }
.win-d { left: 362px; top: 1px; }
.win-e { left: 388px; top: 27px; }
.front {
  left: 414px;
  top: 52px;
  right: 82px;
  bottom: 75px;
  box-shadow: 0 0 2px rgba(0, 0, 0, 0.5);
}
.titlebar {
  height: 31px;
  padding-left: 8px;
  display: flex;
  align-items: center;
}
.bar {
  width: 1px;
  height: 12px;
  margin: 0 9px 0 7px;
  background: #888;
}
.titlebar .i16 + .i16 {
  margin-left: 6px;
}
.bar.thin {
  margin: 0 7px 0 8px;
}
.quick {
  width: 7px;
  height: 7px;
  margin-left: 7px;
}
.caption {
  flex: 1;
}
.back .caption,
.back .wb {
  color: #8c8c8c;
}
.back.active .caption {
  color: #000;
}
.wb {
  width: 46px;
  height: 30px;
  display: flex;
  align-items: center;
  justify-content: center;
}
.wb svg {
  width: 11px;
  height: 11px;
}
.tabs {
  height: 24px;
  display: flex;
  align-items: center;
}
.file {
  width: 56px;
  height: 24px;
  background: #0063b1;
  color: #fff;
}
.tab {
  width: 58px;
  height: 24px;
  border: 1px solid transparent;
  border-bottom: 0;
  color: #333;
}
.tab.open {
  background: #f5f6f7;
  border-color: #dadbdc;
}
.collapse {
  color: #999;
  margin-right: 9px;
}
.help {
  width: 16px;
  height: 16px;
  margin-right: 3px;
  border-radius: 50%;
  background: #0e63b4;
  color: #fff;
  font-weight: bold;
  line-height: 16px;
}

.ribbon {
  height: 92px;
  display: flex;
  background: #f5f6f7;
  border-top: 1px solid #dadbdc;
  border-bottom: 1px solid #dadbdc;
  color: #262626;
}
.group {
  display: flex;
  flex-direction: column;
  justify-content: space-between;
  border-right: 1px solid #e2e3e4;
  margin: 3px 0 2px;
}
.clip { width: 263px; }
.org { width: 165px; }
.new { width: 83px; }
.open-group { width: 133px; }
.sel { width: 115px; }
.group h2 {
  margin: 0;
  font-size: 12px;
  font-weight: 400;
  line-height: 15px;
  text-align: center;
  color: #444;
}
.tools {
  display: flex;
}
.big {
  width: 42px;
  display: flex;
  flex-direction: column;
  align-items: center;
  line-height: 13px;
  padding-top: 4px;
}
.big > svg:first-child {
  width: 32px;
  height: 32px;
  margin-bottom: 3px;
}
.clip .tools { padding-left: 3px; }
.big.pin { width: 70px; }
.clip .big + .stack { padding-left: 3px; }
.big.props { width: 64px; }
.off { color: #737373; }
.stack {
  display: flex;
  flex-direction: column;
  padding-left: 4px;
}
.small {
  height: 22px;
  display: flex;
  align-items: center;
  gap: 3px;
  white-space: nowrap;
}
.loose {
  padding-top: 8px;
  gap: 7px;
}
.tri {
  width: 6px;
  height: 4px;
  color: #222;
}
.big .tri {
  margin-top: 4px;
}
.tri.pale { color: #bbb; }
.split {
  width: 1px;
  margin-left: 4px;
  background: #e2e3e4;
}
.split + .stack { padding-left: 6px; }
.org .tools { padding-left: 4px; }
.new .tools { padding-left: 3px; }
.open-group .stack { padding-left: 0; }
.sel .tools { padding-left: 2px; }

.address {
  height: 35px;
  display: flex;
  align-items: center;
  padding: 0 12px 0 13px;
}
.nav-btn svg { width: 12px; height: 12px; }
.nav-btn { color: #666; }
.nav-btn.dim { color: #ddd; }
.nav-btn.fwd { margin-left: 18px; transform: rotate(180deg); }
.nav-btn.recent { margin-left: 14px; }
.nav-btn.recent svg { width: 8px; height: 8px; }
.nav-btn.up { margin: 0 8px 0 10px; transform: rotate(90deg); }
.crumbs {
  flex: 1;
  height: 22px;
  border: 1px solid #d9d9d9;
  display: flex;
  align-items: center;
  gap: 6px;
  padding-left: 1px;
  color: #222;
}
.crumbs .i8 { color: #666; }
.drop { color: #555; }
.refresh {
  width: 18px;
  height: 20px;
  border-left: 1px solid #d9d9d9;
  margin-left: -4px;
}
.refresh svg {
  width: 12px;
  height: 12px;
  margin: 0 auto;
}
.find {
  width: 202px;
  height: 22px;
  margin-left: 12px;
  border: 1px solid #d9d9d9;
  display: flex;
  align-items: center;
  padding: 0 8px;
}
.find svg { width: 12px; height: 12px; }
input::placeholder { color: #6d6d6d; opacity: 1; }

.body {
  flex: 1;
  min-height: 0;
  display: flex;
}
.tree {
  width: 139px;
}
.tree a {
  height: 24px;
  padding-left: 40px;
  display: flex;
  align-items: center;
  gap: 4px;
  white-space: nowrap;
}
.tree .root { padding-left: 32px; }
.tree .current { background: #d9d9d9; }
.vbar {
  width: 16px;
  margin-left: 1px;
  display: flex;
  flex-direction: column;
  background: #f0f0f0;
  color: #555;
}
.vbar button,
.hbar button {
  width: 16px;
  height: 16px;
  display: flex;
  align-items: center;
  justify-content: center;
}
.track {
  flex: 1;
  display: flex;
  flex-direction: column;
}
.thumb {
  height: 31%;
  margin-top: 94px;
  background: #cdcdcd;
}
.list {
  flex: 1;
  min-width: 0;
  display: flex;
  flex-direction: column;
  justify-content: space-between;
  padding-left: 4px;
}
table {
  table-layout: fixed;
  border-collapse: collapse;
  margin: 0 8px 0 11px;
  color: #6d6d6d;
}
.c-date { width: 144px; }
.c-type { width: 120px; }
.c-size { width: 80px; }
th {
  position: relative;
  height: 26px;
  padding: 0 6px;
  text-align: left;
  font-weight: 400;
  color: #4c607a;
  border-right: 1px solid #e5e5e5;
}
.sort {
  position: absolute;
  top: 0;
  left: 49%;
  color: #777;
}
td {
  height: 21px;
  padding: 0 7px;
  white-space: nowrap;
}
tbody::before {
  content: '';
  display: block;
  height: 5px;
}
.cell {
  display: flex;
  gap: 4px;
  color: #000;
}
.num { text-align: right; }
.hbar {
  height: 16px;
  display: flex;
  background: #f0f0f0;
  color: #555;
}
.hthumb {
  flex: 1;
  background: #cdcdcd;
}
.lft { transform: rotate(-90deg); }
.rgt { transform: rotate(90deg); }
.status {
  height: 25px;
  padding: 0 4px 0 14px;
  display: flex;
  align-items: center;
  justify-content: space-between;
  color: #1e395b;
}
.views { display: flex; }
.view {
  width: 22px;
  height: 22px;
  border: 1px solid transparent;
  display: flex;
  align-items: center;
  justify-content: center;
}
.view svg { width: 16px; height: 12px; }
.view.on {
  background: #cce8ff;
  border-color: #66b5dc;
}

.booster {
  position: absolute;
  left: 190px;
  top: 40px;
  right: 190px;
  bottom: 80px;
  display: flex;
  flex-direction: column;
  overflow: hidden;
  border: 1px solid #0c0c0c;
  border-radius: 7px;
  background: #222;
  box-shadow: 0 2px 8px rgba(0, 0, 0, 0.6);
  color: #858585;
}
.bhead {
  height: 32px;
  padding-left: 11px;
  display: flex;
  align-items: center;
  gap: 8px;
  font-size: 13px;
  color: #b4b4b4;
}
.bhead svg {
  width: 22px;
  height: 22px;
}
.fix {
  margin: auto 0 99px 100px;
  font-size: 15px;
  line-height: 20px;
}
.progress-text {
  margin: 0 0 8px 19px;
  font-size: 13px;
  line-height: 20px;
}
.progress {
  height: 4px;
  background: #df3540;
}

.mark {
  position: absolute;
  right: 48px;
  bottom: 46px;
  display: flex;
  align-items: center;
  font-family: 'Liberation Sans', sans-serif;
  font-size: 32px;
  line-height: 40px;
  color: rgba(255, 255, 255, 0.5);
  text-shadow: 0 0 2px rgba(130, 140, 150, 0.4);
  pointer-events: none;
}
.mark svg {
  width: 60px;
  height: 64px;
  filter: drop-shadow(0 0 1px rgba(130, 140, 150, 0.7));
}

.taskbar {
  position: relative;
  height: 40px;
  display: flex;
  background: linear-gradient(90deg, #02131e, #000c1b);
  color: #fff;
}
.start {
  width: 48px;
  display: flex;
  align-items: center;
  justify-content: center;
}
.start svg { width: 16px; height: 16px; }
.search {
  width: 288px;
  display: flex;
  align-items: center;
  background: #f1f1f1;
  border: 1px solid #b9bec1;
  padding-left: 11px;
  font-size: 14px;
}
.glass {
  width: 18px;
  height: 18px;
  margin-right: 10px;
}
.search input::placeholder { color: #333; }
.flowers {
  width: 80px;
  height: 38px;
}
.app {
  width: 48px;
  margin-right: 1px;
  display: flex;
  align-items: center;
  justify-content: center;
}
.app.task { margin-right: 3px; }
.app svg { width: 24px; height: 24px; }
.app .tv { width: 18px; height: 18px; }
.app.hot {
  background: #97592a;
  box-shadow: inset 0 -2px #ff7b16;
}
.app.run {
  background: linear-gradient(#76b9ed, #76b9ed) center bottom / 40px 2px no-repeat;
}
.tray {
  display: flex;
  align-items: center;
  gap: 8px;
  margin-right: 8px;
}
.tray svg { width: 16px; height: 16px; }
.clock {
  width: 56px;
  line-height: 18px;
  white-space: nowrap;
}
.note {
  margin: 0 20px 0 16px;
}
.note svg { width: 16px; height: 16px; }
.edge-line {
  width: 1px;
  margin-right: 4px;
  background: #4a545d;
}
</style>
